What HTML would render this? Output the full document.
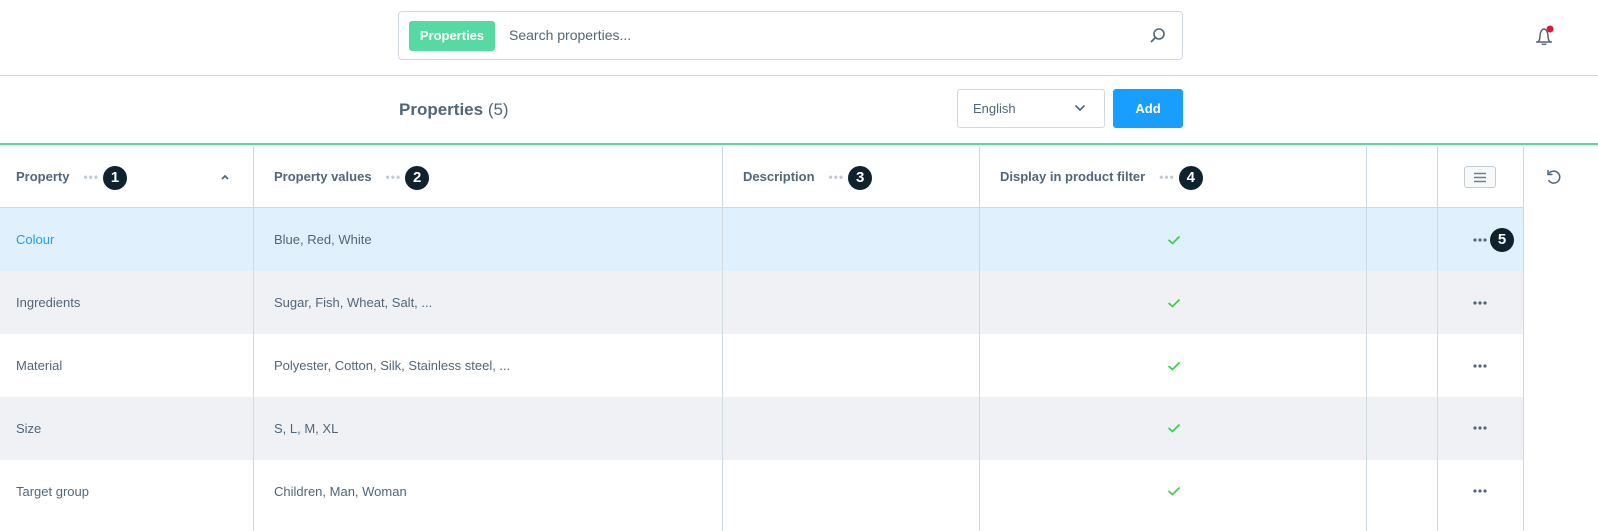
<!DOCTYPE html>
<html><head><style>
*{box-sizing:border-box;margin:0;padding:0}
body{width:1598px;height:531px;background:#fff;font-family:"Liberation Sans",sans-serif;color:#52667a;position:relative;overflow:hidden;font-size:13px}
.abs{position:absolute}
.search{left:398px;top:11px;width:785px;height:49px;border:1px solid #d1d9e0;border-radius:4px}
.tag{left:10px;top:9px;width:86px;height:30px;background:#57d9a3;border-radius:3px;color:#fff;font-weight:bold;font-size:13px;line-height:30px;text-align:center}
.hl{left:0;width:1598px;height:1px;background:#d1d9e0}
.num{display:inline-block;width:24px;height:24px;border-radius:50%;background:#0f222d;color:#fff;font-weight:bold;font-size:15px;line-height:24px;text-align:center;vertical-align:middle}
.dots{color:#c3ccd5;font-size:12px;letter-spacing:1px;margin:0 4px 0 14px;vertical-align:middle}
.th{top:146px;height:61px;line-height:61px;font-weight:bold;font-size:13px;color:#52667a}
.row{left:0;width:1523px;height:63px}
.cell{line-height:63px;font-size:13px;color:#52667a}
.vl{top:146px;width:1px;height:385px;background:#d1d9e0}
.chk{left:1167px;width:14px;height:10px}
.act{left:1473px;width:14px;height:4px}
</style></head><body>
<div class="abs search">
 <div class="abs tag">Properties</div>
 <div class="abs" style="left:110px;top:15px;font-size:14px;color:#52667a">Search properties...</div>
 <svg class="abs" style="left:750px;top:15px" width="18" height="18" viewBox="0 0 18 18"><circle cx="10" cy="7" r="5" fill="none" stroke="#52667a" stroke-width="1.6"/><path d="M6.5 10.5L2.5 14.5" stroke="#52667a" stroke-width="1.8" stroke-linecap="round"/></svg>
</div>
<svg class="abs" style="left:1532px;top:22px" width="26" height="26" viewBox="0 0 26 26"><path d="M4 20h16M6 20c1.5-1.5 2-3 2-6 0-4 2-7 4-7s4 3 4 7c0 3 .5 4.5 2 6M10 21.5c.5 1.2 3.5 1.2 4 0" fill="none" stroke="#52667a" stroke-width="1.5" stroke-linejoin="round"/><circle cx="18" cy="7" r="3.5" fill="#e3173e"/></svg>
<div class="abs hl" style="top:75px"></div>
<div class="abs" style="left:399px;top:100px;font-size:17px;color:#52667a"><b>Properties</b> (5)</div>
<div class="abs" style="left:957px;top:89px;width:148px;height:39px;border:1px solid #d1d9e0;border-radius:3px;font-size:13px;line-height:37px;padding-left:15px">English
 <svg class="abs" style="left:116px;top:14px" width="12" height="8" viewBox="0 0 12 8"><path d="M1.5 1.5l4.5 4.5 4.5-4.5" fill="none" stroke="#52667a" stroke-width="1.6"/></svg></div>
<div class="abs" style="left:1113px;top:89px;width:70px;height:39px;background:#189eff;border-radius:3px;color:#fff;font-weight:bold;line-height:39px;text-align:center">Add</div>
<div class="abs" style="left:0;top:143px;width:1598px;height:2px;background:#57d9a3"></div>

<div class="abs row" style="top:208px;background:#e1f0fd"></div>
<div class="abs row" style="top:271px;background:#f0f1f5"></div>
<div class="abs row" style="top:397px;background:#f0f1f5"></div>
<div class="abs" style="left:0;top:207px;width:1523px;height:1px;background:#d1d9e0"></div>

<div class="abs th" style="left:16px">Property<span class="dots">•••</span><span class="num">1</span></div>
<svg class="abs" style="left:220px;top:174px" width="10" height="7" viewBox="0 0 10 7"><path d="M2 5l3-3 3 3" fill="none" stroke="#52667a" stroke-width="1.8"/></svg>
<div class="abs th" style="left:274px">Property values<span class="dots">•••</span><span class="num">2</span></div>
<div class="abs th" style="left:743px">Description<span class="dots">•••</span><span class="num">3</span></div>
<div class="abs th" style="left:1000px">Display in product filter<span class="dots">•••</span><span class="num">4</span></div>
<div class="abs" style="left:1464px;top:166px;width:32px;height:22px;border:1px solid #c3ccd5;border-radius:3px;background:#f7f9fa"><svg class="abs" style="left:8px;top:5px" width="14" height="11" viewBox="0 0 14 11"><path d="M1 1.5h12M1 5.5h12M1 9.5h12" stroke="#6b7f93" stroke-width="1.5"/></svg></div>
<svg class="abs" style="left:1544px;top:167px" width="20" height="20" viewBox="0 0 20 20"><path d="M5 6.5A6 6 0 1 1 4.5 13" fill="none" stroke="#52667a" stroke-width="1.5"/><path d="M4 3v4.5h4.5" fill="none" stroke="#52667a" stroke-width="1.5"/></svg>

<div class="abs vl" style="left:253px"></div><div class="abs vl" style="left:722px"></div><div class="abs vl" style="left:979px"></div><div class="abs vl" style="left:1366px"></div><div class="abs vl" style="left:1437px"></div><div class="abs vl" style="left:1523px"></div>

<div class="abs cell" style="left:16px;top:208px;color:#189eff">Colour</div>
<div class="abs cell" style="left:16px;top:271px">Ingredients</div>
<div class="abs cell" style="left:16px;top:334px">Material</div>
<div class="abs cell" style="left:16px;top:397px">Size</div>
<div class="abs cell" style="left:16px;top:460px">Target group</div>
<div class="abs cell" style="left:274px;top:208px">Blue, Red, White</div>
<div class="abs cell" style="left:274px;top:271px">Sugar, Fish, Wheat, Salt, ...</div>
<div class="abs cell" style="left:274px;top:334px">Polyester, Cotton, Silk, Stainless steel, ...</div>
<div class="abs cell" style="left:274px;top:397px">S, L, M, XL</div>
<div class="abs cell" style="left:274px;top:460px">Children, Man, Woman</div>
<svg class="abs chk" style="top:235px" viewBox="0 0 14 10"><path d="M1.5 5l4 3.5 7-7" fill="none" stroke="#37d046" stroke-width="1.7"/></svg>
<svg class="abs chk" style="top:298px" viewBox="0 0 14 10"><path d="M1.5 5l4 3.5 7-7" fill="none" stroke="#37d046" stroke-width="1.7"/></svg>
<svg class="abs chk" style="top:361px" viewBox="0 0 14 10"><path d="M1.5 5l4 3.5 7-7" fill="none" stroke="#37d046" stroke-width="1.7"/></svg>
<svg class="abs chk" style="top:423px" viewBox="0 0 14 10"><path d="M1.5 5l4 3.5 7-7" fill="none" stroke="#37d046" stroke-width="1.7"/></svg>
<svg class="abs chk" style="top:486px" viewBox="0 0 14 10"><path d="M1.5 5l4 3.5 7-7" fill="none" stroke="#37d046" stroke-width="1.7"/></svg>
<svg class="abs act" style="top:238px" viewBox="0 0 14 4"><circle cx="2" cy="2" r="1.6" fill="#52667a"/><circle cx="7" cy="2" r="1.6" fill="#52667a"/><circle cx="12" cy="2" r="1.6" fill="#52667a"/></svg>
<span class="abs num" style="left:1490px;top:228px">5</span>
<svg class="abs act" style="top:301px" viewBox="0 0 14 4"><circle cx="2" cy="2" r="1.6" fill="#52667a"/><circle cx="7" cy="2" r="1.6" fill="#52667a"/><circle cx="12" cy="2" r="1.6" fill="#52667a"/></svg>
<svg class="abs act" style="top:364px" viewBox="0 0 14 4"><circle cx="2" cy="2" r="1.6" fill="#52667a"/><circle cx="7" cy="2" r="1.6" fill="#52667a"/><circle cx="12" cy="2" r="1.6" fill="#52667a"/></svg>
<svg class="abs act" style="top:426px" viewBox="0 0 14 4"><circle cx="2" cy="2" r="1.6" fill="#52667a"/><circle cx="7" cy="2" r="1.6" fill="#52667a"/><circle cx="12" cy="2" r="1.6" fill="#52667a"/></svg>
<svg class="abs act" style="top:489px" viewBox="0 0 14 4"><circle cx="2" cy="2" r="1.6" fill="#52667a"/><circle cx="7" cy="2" r="1.6" fill="#52667a"/><circle cx="12" cy="2" r="1.6" fill="#52667a"/></svg>
</body></html>
